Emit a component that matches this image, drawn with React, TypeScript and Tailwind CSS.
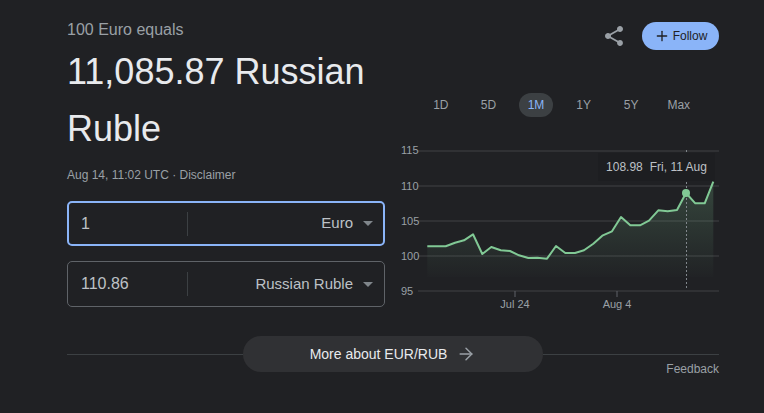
import { ArrowRight, Plus } from 'lucide-react';

const font = 'font-["Liberation_Sans",_Arial,_sans-serif]';

const ranges = ['1D', '5D', '1M', '1Y', '5Y', 'Max'];

const points: [number, number][] = [
  [27.3, 106.3], [45.7, 106.3], [55, 102.7], [64, 100.3], [73, 94.3], [82.3, 114], [91.3, 107],
  [100.7, 110.3], [110, 111], [119, 115.3], [128.3, 118], [137.3, 117.7], [147, 118.7], [156, 106],
  [165.3, 113], [175, 113], [184, 110.3], [193.3, 103.7], [202.3, 95.7], [212, 91.3], [221, 77],
  [230.3, 85.3], [240, 85.3], [249, 80.7], [258.3, 70.3], [267.7, 71.3], [277, 70], [286, 53],
  [295.3, 63.3], [304.7, 63.3], [313.3, 41.7],
];

const line = points.map((p) => p.join(',')).join(' ');
const area = `27.3,137 ${line} 313.3,137`;

function CurrencyBox({ value, currency, active }: { value: string; currency: string; active?: boolean }) {
  return (
    <div
      className={
        active
          ? 'flex h-[45px] items-center rounded-[5px] border-2 border-[#8ab4f8] pl-[12px] pr-[10px]'
          : 'flex h-[46px] items-center rounded-[5px] border border-[#5f6368] pl-[13px] pr-[11px]'
      }
    >
      <span className="w-[106px] text-base text-[#bdc1c6]">{value}</span>
      <span className="h-6 w-px bg-[#3c4043]" />
      <span className="flex-1 text-right text-[15px] text-[#bdc1c6]">{currency}</span>
      <span className="ml-[10px] h-0 w-0 border-x-[5px] border-t-[5px] border-x-transparent border-t-[#80868b]" />
    </div>
  );
}

function Chart() {
  return (
    <div className="relative mt-[23px] h-[170px] w-[319px]">
      <svg width="319" height="170" viewBox="0 0 319 170" className="block">
        <defs>
          <linearGradient id="fill" x1="0" y1="0" x2="0" y2="1">
            <stop offset="0" stopColor="#81c995" stopOpacity="0.22" />
            <stop offset="1" stopColor="#81c995" stopOpacity="0.01" />
          </linearGradient>
        </defs>
        {[11, 46, 81, 116, 151].map((y) => (
          <line key={y} x1="18" x2="319" y1={y} y2={y} stroke="#303134" strokeWidth="2" />
        ))}
        <polygon points={area} fill="url(#fill)" />
        <line x1="115" x2="115" y1="151" y2="157" stroke="#5f6368" />
        <line x1="217" x2="217" y1="151" y2="157" stroke="#5f6368" />
        <line x1="286.5" x2="286.5" y1="10" y2="150" stroke="#80868b" strokeDasharray="2 2" />
        <polyline points={line} fill="none" stroke="#81c995" strokeWidth="2" strokeLinejoin="round" />
        <circle cx="286" cy="53" r="4" fill="#81c995" />
        <g fontSize="11" fill="#9aa0a6" fontFamily="Liberation Sans, sans-serif">
          {[['115', 14], ['110', 50], ['105', 85], ['100', 120], ['95', 155]].map(([label, y]) => (
            <text key={label} x="1" y={y}>
              {label}
            </text>
          ))}
          <text x="115" y="168" textAnchor="middle">Jul 24</text>
          <text x="217" y="168" textAnchor="middle">Aug 4</text>
        </g>
      </svg>
      <div className="absolute left-[198px] top-[13px] flex h-[28px] w-[117px] items-center justify-center gap-[7px] whitespace-nowrap bg-[#1d1e21] text-xs text-[#bdc1c6]">
        <span>108.98</span>
        <span>Fri, 11 Aug</span>
      </div>
    </div>
  );
}

export default function App() {
  return (
    <div className={`${font} h-[413px] w-[764px] overflow-hidden bg-[#202124] pl-[67px] pr-[45px]`}>
      <div className="flex gap-[15px]">
        <div className="w-[318px] pt-[20px]">
          <div className="text-base leading-5 text-[#9aa0a6]">100 Euro equals</div>
          <div className="mt-[3px] text-4xl leading-[57px] text-[#e8eaed]">11,085.87 Russian Ruble</div>
          <div className="mt-[10px] text-xs leading-4 text-[#9aa0a6]">Aug 14, 11:02 UTC · Disclaimer</div>
          <div className="mt-[18px] flex flex-col gap-[15px]">
            <CurrencyBox value="1" currency="Euro" active />
            <CurrencyBox value="110.86" currency="Russian Ruble" />
          </div>
        </div>

        <div className="w-[319px] pt-[22px]">
          <div className="flex items-center justify-end gap-[16px]">
            <svg width="24" height="24" viewBox="0 0 24 24" fill="#9aa0a6">
              <path d="M18 16.08c-.76 0-1.44.3-1.96.77L8.91 12.7c.05-.23.09-.46.09-.7s-.04-.47-.09-.7l7.05-4.11c.54.5 1.25.81 2.04.81 1.66 0 3-1.34 3-3s-1.34-3-3-3-3 1.34-3 3c0 .24.04.47.09.7L8.04 9.81C7.5 9.31 6.79 9 6 9c-1.66 0-3 1.34-3 3s1.34 3 3 3c.79 0 1.5-.31 2.04-.81l7.12 4.16c-.05.21-.08.43-.08.65 0 1.61 1.31 2.92 2.92 2.92s2.92-1.31 2.92-2.92-1.31-2.92-2.92-2.92z" />
            </svg>
            <button className="flex h-[28px] w-[77px] items-center justify-center gap-[3px] rounded-full bg-[#8ab4f8] text-xs text-[#202124]">
              <Plus size={16} strokeWidth={2} />
              Follow
            </button>
          </div>
          <div className="mt-[43px] flex pl-[17px]">
            {ranges.map((r) => (
              <div key={r} className="flex w-[47.6px] justify-center">
                <span
                  className={
                    r === '1M'
                      ? 'flex h-6 w-[34px] items-center justify-center rounded-full bg-[#3c4043] text-xs text-[#8ab4f8]'
                      : 'flex h-6 items-center text-xs text-[#9aa0a6]'
                  }
                >
                  {r}
                </span>
              </div>
            ))}
          </div>
          <Chart />
        </div>
      </div>

      <div className="mt-[26px]">
        <div className="flex items-center">
          <span className="h-px flex-1 bg-[#3c4043]" />
          <button className="flex h-9 w-[300px] items-center justify-center gap-[9px] rounded-full bg-[#303134] text-sm text-[#e8eaed]">
            More about EUR/RUB
            <ArrowRight size={20} strokeWidth={1.75} className="text-[#9aa0a6]" />
          </button>
          <span className="h-px flex-1 bg-[#3c4043]" />
        </div>
        <div className="-mt-[11px] text-right text-xs leading-4 text-[#9aa0a6]">Feedback</div>
      </div>
    </div>
  );
}
